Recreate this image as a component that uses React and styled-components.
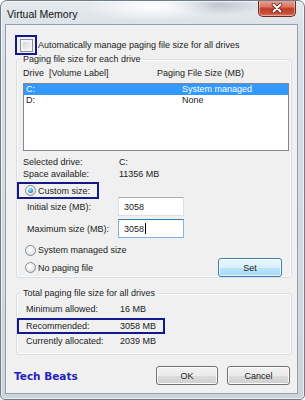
import React from 'react';
import styled, { createGlobalStyle } from 'styled-components';

const GlobalStyle = createGlobalStyle`
  html, body {
    margin: 0;
    padding: 0;
    background: #fff;
  }
  body {
    font-family: "Liberation Sans", Arial, sans-serif;
  }
`;

const Window = styled.div`
  box-sizing: border-box;
  width: 305px;
  height: 400px;
  display: flex;
  flex-direction: column;
  padding: 0 6px 5px 4px;
  border: 1px solid #6f7c8a;
  border-radius: 7px 7px 5px 5px;
  background:
    radial-gradient(ellipse 70px 14px at 150px 6px, rgba(255,255,255,0.95), rgba(255,255,255,0) 100%),
    radial-gradient(ellipse 50px 10px at 215px 4px, rgba(120,130,140,0.35), rgba(120,130,140,0) 100%),
    linear-gradient(to bottom, #e4e9ee 0%, #d9dfe6 10%, #d3dae2 60%, #cdd4dc 100%);
  box-shadow: inset 0 0 0 1px rgba(255,255,255,0.6);
  overflow: hidden;
`;

const TitleBar = styled.div`
  height: 23px;
  flex: none;
  display: flex;
  justify-content: space-between;
  align-items: flex-start;
  padding-left: 2px;
`;

const Title = styled.span`
  margin-top: 7px;
  font-size: 10.5px;
  line-height: 12px;
  color: #111;
`;

const CloseButton = styled.div`
  width: 38px;
  height: 17px;
  margin: -1px 2px 0 0;
  box-sizing: border-box;
  display: flex;
  align-items: center;
  justify-content: center;
  border: 1px solid #6b2b22;
  border-top: none;
  border-radius: 0 0 5px 5px;
  background: linear-gradient(to bottom, #eba597 0%, #d97a66 40%, #c23b26 55%, #c9503d 85%, #de8068 100%);
  box-shadow: inset 0 0 0 1px rgba(255,220,210,0.5);
`;

const Client = styled.div`
  flex: 1;
  box-sizing: border-box;
  border: 1px solid #94a0ad;
  background: #f0f0f0;
  display: flex;
  flex-direction: column;
  font-size: 9px;
  color: #222;
`;

const CheckRow = styled.div`
  display: flex;
  align-items: center;
  margin: 12px 0 0 11px;
  height: 16px;
`;

const Ring = styled.div`
  outline: 2px solid #15188c;
`;

const CheckHolder = styled(Ring)`
  width: 18px;
  height: 16px;
  display: flex;
  align-items: center;
  justify-content: center;
`;

const CheckBox = styled.span`
  box-sizing: border-box;
  width: 13px;
  height: 13px;
  border: 1px solid #8e8f8f;
  background: linear-gradient(135deg, #c9cdd2 0%, #e9eaec 60%, #f7f7f7 100%);
  box-shadow: inset 0 0 0 2px #f4f4f4;
`;

const CheckLabel = styled.span`
  margin-left: 3px;
  line-height: 12px;
`;

const Group = styled.fieldset`
  box-sizing: border-box;
  width: 276px;
  margin: ${(p) => p.$top}px 0 0 10px;
  padding: 0;
  border: 1px solid #d5dfe5;
  border-radius: 3px;
  box-shadow: inset 0 0 0 1px #fbfbfb;
`;

const Legend = styled.legend`
  margin-left: 4px;
  padding: 0 2px;
  font-size: 9px;
  line-height: 10px;
`;

const GroupBody = styled.div`
  padding: 0 2px ${(p) => p.$bottom}px ${(p) => p.$left}px;
  display: flex;
  flex-direction: column;
`;

const HeaderRow = styled.div`
  margin-top: 4px;
  display: grid;
  grid-template-columns: 134px 1fr;
  line-height: 11px;
  white-space: pre;
`;

const ListBox = styled.div`
  margin-top: 4px;
  box-sizing: border-box;
  height: 68px;
  border: 1px solid #828790;
  background: #fff;
`;

const ListRow = styled.div`
  display: grid;
  grid-template-columns: 156px 1fr;
  height: 11px;
  line-height: 11px;
  padding-left: 2px;
  background: ${(p) => (p.$selected ? '#3399ff' : 'transparent')};
  color: ${(p) => (p.$selected ? '#fff' : '#222')};
`;

const InfoRow = styled.div`
  display: grid;
  grid-template-columns: ${(p) => p.$label}px 1fr;
  line-height: ${(p) => p.$h || 12}px;
  margin-top: ${(p) => p.$top || 0}px;
`;

const RadioRow = styled.div`
  display: flex;
  align-items: center;
  height: ${(p) => p.$h || 12}px;
  margin-top: ${(p) => p.$top || 0}px;
  padding-left: 2px;
`;

const CustomRow = styled(Ring)`
  display: flex;
  align-items: center;
  width: 78px;
  height: 13px;
  margin: 4px 0 0 -4px;
  padding-left: 6px;
  box-sizing: border-box;
`;

const Radio = styled.span`
  box-sizing: border-box;
  width: 11px;
  height: 11px;
  flex: none;
  border-radius: 50%;
  border: 1px solid #7f8a94;
  display: flex;
  align-items: center;
  justify-content: center;
  background: radial-gradient(circle at 40% 35%, #ffffff 0%, #ececec 55%, #d2d4d6 100%);
`;

const RadioDot = styled.span`
  width: 5px;
  height: 5px;
  border-radius: 50%;
  background: radial-gradient(circle at 40% 35%, #b8e8ff 0%, #3b9ad6 55%, #17507a 100%);
`;

const RadioText = styled.span`
  margin-left: 2px;
  line-height: 12px;
`;

const SizeRow = styled.div`
  display: flex;
  align-items: center;
  margin-top: ${(p) => p.$top}px;
  padding-left: 4px;
`;

const SizeLabel = styled.span`
  width: 91px;
`;

const TextBox = styled.div`
  box-sizing: border-box;
  width: 66px;
  height: 19px;
  padding-left: 5px;
  display: flex;
  align-items: center;
  background: #fff;
  border: 1px solid ${(p) => (p.$focused ? '#7eb4ea' : '#dbdfe6')};
  border-top-color: ${(p) => (p.$focused ? '#3d7bad' : '#abadb3')};
`;

const Caret = styled.span`
  width: 1px;
  height: 11px;
  margin-left: 1px;
  background: #000;
`;

const Button = styled.div`
  box-sizing: border-box;
  width: ${(p) => p.$w}px;
  height: 19px;
  display: flex;
  align-items: center;
  justify-content: center;
  border-radius: 3px;
  border: 1px solid ${(p) => (p.$default ? '#3c7fb1' : '#707070')};
  background: ${(p) =>
    p.$default
      ? 'linear-gradient(to bottom, #eaf6fd 0%, #d9f0fc 50%, #bee6fd 50%, #a7d9f5 100%)'
      : 'linear-gradient(to bottom, #f2f2f2 0%, #ebebeb 50%, #dddddd 50%, #cfcfcf 100%)'};
  box-shadow: inset 0 0 0 1px ${(p) => (p.$default ? 'rgba(255,255,255,0.7)' : '#fcfcfc')};
  color: #222;
  margin-right: ${(p) => p.$mr || 0}px;
`;

const ChoiceRow = styled.div`
  display: flex;
  align-items: center;
  justify-content: space-between;
  margin-top: 2px;
  height: 19px;
`;

const RecRow = styled(Ring)`
  display: grid;
  grid-template-columns: 94px 1fr;
  width: 144px;
  height: 12px;
  line-height: 12px;
  margin: 4px 0 0 -7px;
  padding-left: 7px;
  box-sizing: border-box;
`;

const Footer = styled.div`
  margin-top: 11px;
  display: flex;
  align-items: center;
  padding: 0 7px 0 8px;
`;

const Brand = styled.span`
  font-family: "DejaVu Sans", Verdana, sans-serif;
  font-weight: bold;
  font-size: 10.5px;
  color: #1f22bd;
`;

const ButtonGroup = styled.div`
  margin-left: auto;
  display: flex;
  gap: 9px;
`;

const CloseGlyph = () => (
  <svg width="12" height="10" viewBox="0 0 12 10">
    <path d="M2.5 1.5 L9.5 8.5 M9.5 1.5 L2.5 8.5" stroke="#5a1c14" strokeWidth="3.6" strokeLinecap="round" />
    <path d="M2.5 1.5 L9.5 8.5 M9.5 1.5 L2.5 8.5" stroke="#fff" strokeWidth="2" strokeLinecap="round" />
  </svg>
);

const drives = [
  { drive: 'C:', size: 'System managed', selected: true },
  { drive: 'D:', size: 'None' },
];

export default function App() {
  return (
    <>
      <GlobalStyle />
      <Window>
        <TitleBar>
          <Title>Virtual Memory</Title>
          <CloseButton>
            <CloseGlyph />
          </CloseButton>
        </TitleBar>
        <Client>
          <CheckRow>
            <CheckHolder>
              <CheckBox />
            </CheckHolder>
            <CheckLabel>Automatically manage paging file size for all drives</CheckLabel>
          </CheckRow>

          <Group $top={1}>
            <Legend>Paging file size for each drive</Legend>
            <GroupBody $left={6} $bottom={0}>
              <HeaderRow>
                <span>Drive  [Volume Label]</span>
                <span>Paging File Size (MB)</span>
              </HeaderRow>
              <ListBox>
                {drives.map((d) => (
                  <ListRow key={d.drive} $selected={d.selected}>
                    <span>{d.drive}</span>
                    <span>{d.size}</span>
                  </ListRow>
                ))}
              </ListBox>
              <InfoRow $label={96} $top={5}>
                <span>Selected drive:</span>
                <span>C:</span>
              </InfoRow>
              <InfoRow $label={96}>
                <span>Space available:</span>
                <span>11356 MB</span>
              </InfoRow>
              <CustomRow>
                <Radio>
                  <RadioDot />
                </Radio>
                <RadioText>Custom size:</RadioText>
              </CustomRow>
              <SizeRow $top={0}>
                <SizeLabel>Initial size (MB):</SizeLabel>
                <TextBox>3058</TextBox>
              </SizeRow>
              <SizeRow $top={3}>
                <SizeLabel>Maximum size (MB):</SizeLabel>
                <TextBox $focused>
                  3058
                  <Caret />
                </TextBox>
              </SizeRow>
              <RadioRow $top={6}>
                <Radio />
                <RadioText>System managed size</RadioText>
              </RadioRow>
              <ChoiceRow>
                <RadioRow>
                  <Radio />
                  <RadioText>No paging file</RadioText>
                </RadioRow>
                <Button $w={64} $mr={7} $default>Set</Button>
              </ChoiceRow>
            </GroupBody>
          </Group>

          <Group $top={10}>
            <Legend>Total paging file size for all drives</Legend>
            <GroupBody $left={9} $bottom={7}>
              <InfoRow $label={94} $h={13} $top={5}>
                <span>Minimum allowed:</span>
                <span>16 MB</span>
              </InfoRow>
              <RecRow>
                <span>Recommended:</span>
                <span>3058 MB</span>
              </RecRow>
              <InfoRow $label={94} $top={3}>
                <span>Currently allocated:</span>
                <span>2039 MB</span>
              </InfoRow>
            </GroupBody>
          </Group>

          <Footer>
            <Brand>Tech Beats</Brand>
            <ButtonGroup>
              <Button $w={62}>OK</Button>
              <Button $w={63}>Cancel</Button>
            </ButtonGroup>
          </Footer>
        </Client>
      </Window>
    </>
  );
}
